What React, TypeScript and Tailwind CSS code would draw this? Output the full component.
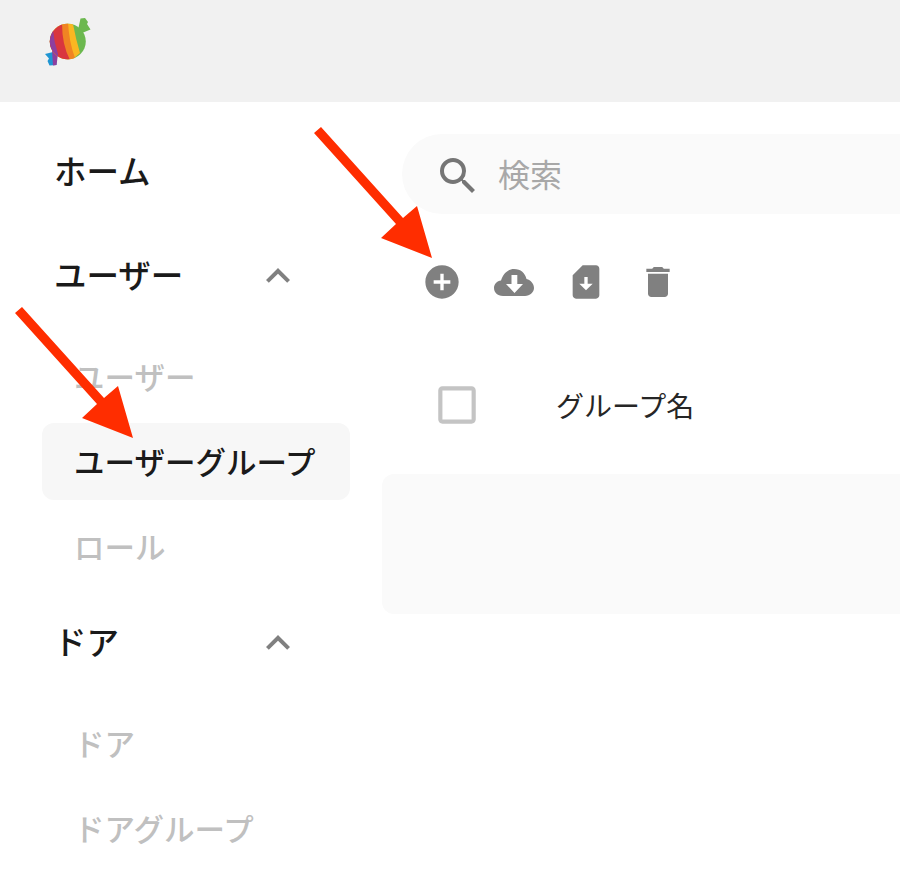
import React from 'react';
import {
  MdAddCircle,
  MdCheckBoxOutlineBlank,
  MdDelete,
  MdExpandLess,
  MdSearch,
  MdSimCardDownload,
} from 'react-icons/md';

const Logo = () => (
  <svg width="100" height="90" viewBox="0 0 100 90">
    <defs>
      <clipPath id="candy-body">
        <ellipse cx="47.8" cy="41.5" rx="18" ry="17.8" />
      </clipPath>
    </defs>
    <path d="M58 30 L60.5 18.5 L65 18 L68 22 L67 24 L70.5 29.5 L62 33 Z" fill="#6cb84f" />
    <path d="M25 54 L33 52 L37 55 L36.5 65 L29.5 65.5 L27.5 61 L29 58.5 Z" fill="#1f95d2" />
    <path d="M32 50 L38 54 L36.5 65 L33 65.5 Z" fill="#8e3f9e" />
    <g clipPath="url(#candy-body)">
      <rect x="20" y="15" width="60" height="55" fill="#6cb84f" />
      <path d="M53 24 Q56 40 60 53 L40 70 L20 40 L30 15 Z" fill="#f9b722" />
      <path d="M48 22 Q49 42 55 58 L40 70 L20 40 L30 15 Z" fill="#f08423" />
      <path d="M42 23 Q42 45 50 60 L40 70 L20 40 L30 15 Z" fill="#d9363e" />
      <path d="M33 30 Q34 42 38 54 L38 62 L20 50 L20 30 Z" fill="#8e3f9e" />
    </g>
  </svg>
);

const Arrow = ({ className }: { className: string }) => (
  <svg className={className} width="122" height="136" viewBox="0 0 122 136">
    <path d="M0 6 L7 0 L89 91 L103 79 L118 131 L67 111 L82 97 Z" fill="#ff2d00" />
  </svg>
);

const CloudIcon = () => (
  <svg width="40" height="27" viewBox="0 0 40 27">
    <path
      d="M9 27 C3 27 0 23 0 19 C0 15 3 12 7 11.5 C9 5 14 0 20 0 C27 0 31 4 32.5 10 C37 11 40 15 40 19 C40 23 36 27 31 27 Z"
      fill="#808080"
    />
    <path d="M17.5 6 H23.3 V15 H29 L20.5 24 L12 15 H17.5 Z" fill="#fff" />
  </svg>
);

const GroupTitle = ({ label, collapsible }: { label: string; collapsible?: boolean }) => (
  <div className="flex h-[76px] w-[248px] items-center justify-between text-[32.5px] font-medium text-[#1a1a1a]">
    <span className="-translate-y-0.5">{label}</span>
    {collapsible && <MdExpandLess size={48} className="text-[#808080]" />}
  </div>
);

const SubItem = ({ label, active }: { label: string; active?: boolean }) => (
  <div
    className={
      active
        ? 'flex h-[77px] w-[308px] items-center rounded-xl bg-[#f7f7f7] pl-8 text-[30.5px] font-medium text-[#1a1a1a]'
        : 'flex h-[77px] w-[308px] items-center rounded-xl pl-8 text-[30.5px] font-medium text-[#c0c0c0]'
    }
  >
    {label}
  </div>
);

export default function App() {
  return (
    <div className="relative h-[880px] w-[900px] overflow-hidden bg-white font-['Noto_Sans_CJK_JP',sans-serif]">
      <header className="flex h-[102px] items-start bg-[#f1f1f1] pl-5">
        <Logo />
      </header>

      <div className="flex">
        <aside className="w-[382px] shrink-0 pt-8">
          <div className="pl-[54px]">
            <GroupTitle label="ホーム" />
          </div>
          <div className="mt-7 pl-[54px]">
            <GroupTitle label="ユーザー" collapsible />
          </div>
          <div className="mt-6 flex flex-col gap-2 pl-[42px]">
            <SubItem label="ユーザー" />
            <SubItem label="ユーザーグループ" active />
            <SubItem label="ロール" />
          </div>
          <div className="mt-5 pl-[54px]">
            <GroupTitle label="ドア" collapsible />
          </div>
          <div className="mt-6 flex flex-col gap-2 pl-[42px]">
            <SubItem label="ドア" />
            <SubItem label="ドアグループ" />
          </div>
        </aside>

        <main className="min-w-0 flex-1 pt-8">
          <div className="ml-5 flex h-20 w-[600px] items-center rounded-l-[40px] bg-[#fafafa] pl-8">
            <MdSearch size={48} className="translate-y-0.5 text-[#757575]" />
            <span className="ml-4 -translate-y-px text-[32px] text-[#a8a8a8]">検索</span>
          </div>

          <div className="ml-6 mt-8 flex h-[72px] items-center text-[#808080]">
            <div className="flex w-[72px] justify-center">
              <MdAddCircle size={40} />
            </div>
            <div className="flex w-[72px] justify-center">
              <CloudIcon />
            </div>
            <div className="flex w-[72px] justify-center">
              <MdSimCardDownload size={40} />
            </div>
            <div className="flex w-[72px] justify-center">
              <MdDelete size={40} />
            </div>
          </div>

          <div className="mt-[62px] flex h-[50px] items-center pl-[50px]">
            <MdCheckBoxOutlineBlank size={50} className="text-[#c4c4c4]" />
            <span className="ml-[74px] text-[28px] text-[#262626]">グループ名</span>
          </div>

          <div className="mt-[44px] h-[140px] w-[600px] rounded-xl bg-[#fafafa]" />
        </main>
      </div>

      <Arrow className="absolute left-[314px] top-[127px]" />
      <Arrow className="absolute left-[15px] top-[307px]" />
    </div>
  );
}
